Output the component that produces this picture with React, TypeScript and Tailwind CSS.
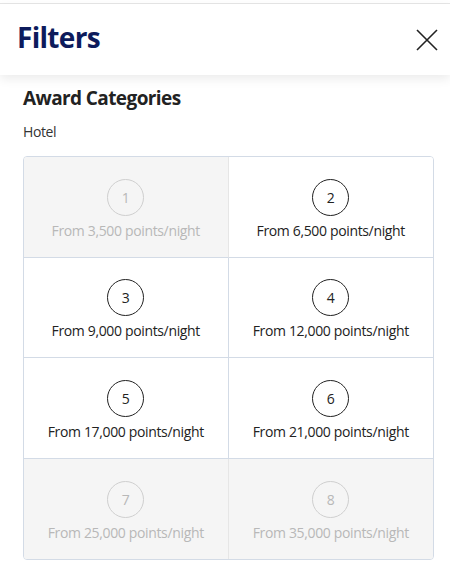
import React from "react";

type Category = {
  level: number;
  points: string;
  disabled: boolean;
};

const categories: Category[] = [
  { level: 1, points: "3,500", disabled: true },
  { level: 2, points: "6,500", disabled: false },
  { level: 3, points: "9,000", disabled: false },
  { level: 4, points: "12,000", disabled: false },
  { level: 5, points: "17,000", disabled: false },
  { level: 6, points: "21,000", disabled: false },
  { level: 7, points: "25,000", disabled: true },
  { level: 8, points: "35,000", disabled: true },
];

const CategoryCell: React.FC<{ cat: Category; index: number }> = ({ cat, index }) => {
  const isRight = index % 2 === 1;
  const isLastRow = index >= categories.length - 2;

  return (
    <button
      disabled={cat.disabled}
      className={[
        "flex h-[100.5px] flex-col items-center justify-center gap-[5px] pt-[6px]",
        cat.disabled ? "bg-[#f5f5f5] text-[#b8b8b8]" : "bg-white text-[#222]",
        isRight ? "" : cat.disabled ? "border-r border-r-[#e6e6e6]" : "border-r border-r-[#d3dbe6]",
        isLastRow ? "" : "border-b border-b-[#d3dbe6]",
      ].join(" ")}
    >
      <span
        className={[
          "flex h-[37px] w-[37px] items-center justify-center rounded-full text-[14px]",
          cat.disabled ? "border border-[#cfcfcf]" : "border border-[#222]",
        ].join(" ")}
      >
        {cat.level}
      </span>
      <span className="text-[14px] leading-[20px] tracking-[-0.35px]">From {cat.points} points/night</span>
    </button>
  );
};

export default function App() {
  return (
    <div className="min-h-[578px] w-[450px] bg-white font-['Open_Sans',sans-serif] pt-[3px]">
      <div className="h-px bg-[#e6e6e6]" />
      <header className="relative z-10 flex h-[71px] items-center justify-between bg-white pb-[6px] pl-[17px] pr-[12px] shadow-[0_4px_10px_rgba(0,0,0,0.08)]">
        <h1 className="text-[28px] font-bold leading-none tracking-[-0.7px] text-[#0d1b5c]">Filters</h1>
        <button aria-label="Close" className="mt-[6px]">
          <svg width="22" height="22" viewBox="0 0 22 22" fill="none" stroke="#222" strokeWidth="1.6">
            <path d="M1 1 L21 21 M21 1 L1 21" />
          </svg>
        </button>
      </header>

      <section className="pl-[23px] pr-[16px] pt-[10px]">
        <h2 className="text-[19px] font-bold leading-[26px] tracking-[-0.6px] text-[#222]">Award Categories</h2>
        <p className="mt-[11px] text-[14px] leading-[20px] tracking-[-0.4px] text-[#333]">Hotel</p>

        <div className="mt-[14px] grid grid-cols-2 overflow-hidden rounded-[4px] border border-[#d3dbe6]">
          {categories.map((cat, i) => (
            <CategoryCell key={cat.level} cat={cat} index={i} />
          ))}
        </div>
      </section>
    </div>
  );
}
